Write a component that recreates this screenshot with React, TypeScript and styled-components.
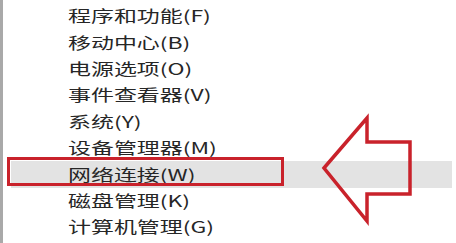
import React from "react";
import styled, { createGlobalStyle } from "styled-components";

const GlobalStyle = createGlobalStyle`
  html, body {
    margin: 0;
    padding: 0;
    background: #fff;
  }
  body {
    width: 456px;
    height: 243px;
    overflow: hidden;
  }
`;

const ITEMS = [
  "程序和功能(F)",
  "移动中心(B)",
  "电源选项(O)",
  "事件查看器(V)",
  "系统(Y)",
  "设备管理器(M)",
  "网络连接(W)",
  "磁盘管理(K)",
  "计算机管理(G)",
];
const ACTIVE = "网络连接(W)";
const RED = "#c9222b";

const Page = styled.div`
  position: relative;
  width: 456px;
  height: 243px;
  background: #fff;
  overflow: hidden;
`;

const Menu = styled.ul`
  list-style: none;
  margin: 0;
  padding: 2.8px 4px 0 8px;
  height: 100%;
  box-sizing: border-box;
  border-left: 3px solid #a9a9a9;
  display: flex;
  flex-direction: column;
`;

const Item = styled.li<{ $active: boolean }>`
  height: 26.4px;
  flex: none;
  display: flex;
  align-items: center;
  padding-left: 57px;
  background: ${({ $active }) => ($active ? "#e3e3e3" : "transparent")};
`;

// the screenshot is stretched sideways, so the label is too
const Label = styled.span`
  display: inline-block;
  font-family: "Noto Sans CJK SC", "Noto Sans", sans-serif;
  font-size: 15.5px;
  line-height: 1;
  color: #262626;
  transform: scaleX(1.48);
  transform-origin: left center;
  white-space: nowrap;
`;

const RedBox = styled.div`
  position: absolute;
  left: 7px;
  top: 157px;
  width: 277px;
  height: 29px;
  box-sizing: border-box;
  border: 3.5px solid ${RED};
`;

const Arrow = styled.svg`
  position: absolute;
  left: 0;
  top: 0;
`;

export default function App() {
  return (
    <Page>
      <GlobalStyle />
      <Menu>
        {ITEMS.map((label) => (
          <Item key={label} $active={label === ACTIVE}>
            <Label>{label}</Label>
          </Item>
        ))}
      </Menu>
      <RedBox />
      <Arrow width="456" height="243" viewBox="0 0 456 243">
        <polygon
          points="324,168 367,118 367,142 410,142 410,194 367,194 367,221"
          fill="none"
          stroke={RED}
          strokeWidth="3.5"
          strokeLinejoin="miter"
        />
      </Arrow>
    </Page>
  );
}
